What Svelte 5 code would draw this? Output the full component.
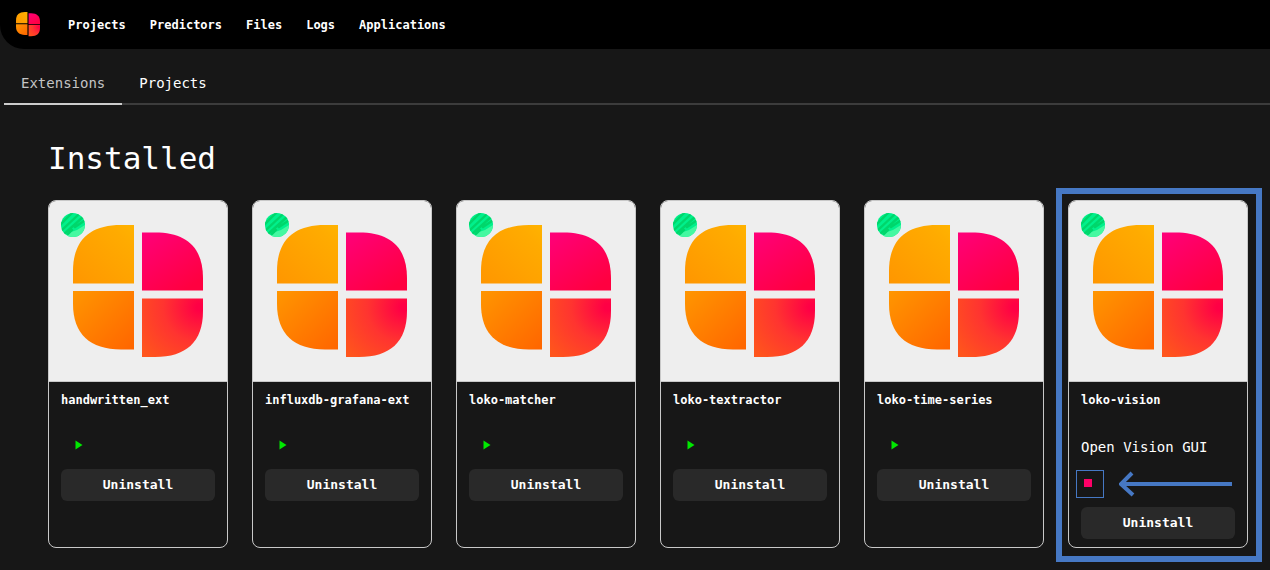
<script>
  const links = ['Projects', 'Predictors', 'Files', 'Logs', 'Applications'];
  const extensions = [
    { name: 'handwritten_ext' },
    { name: 'influxdb-grafana-ext' },
    { name: 'loko-matcher' },
    { name: 'loko-textractor' },
    { name: 'loko-time-series' },
    { name: 'loko-vision', gui: 'Open Vision GUI', running: true }
  ];
</script>

{#snippet logo(id)}
  <svg class="logo" viewBox="0 0 130 132" aria-hidden="true">
    <defs>
      <linearGradient id="{id}-a" x1="0" y1="1" x2="1" y2="0"><stop stop-color="#ff9600" /><stop offset="0.8" stop-color="#ffab00" /><stop offset="1" stop-color="#ffb300" /></linearGradient>
      <linearGradient id="{id}-b" x1="0" y1="0" x2="0.7" y2="1"><stop stop-color="#ff007a" /><stop offset="1" stop-color="#ff0040" /></linearGradient>
      <linearGradient id="{id}-c" x1="0" y1="0" x2="1" y2="1"><stop stop-color="#ff9600" /><stop offset="1" stop-color="#ff6500" /></linearGradient>
      <radialGradient id="{id}-d" cx="0.95" cy="0.15" r="1.2"><stop offset="0.05" stop-color="#ff0045" /><stop offset="0.5" stop-color="#ff3430" /><stop offset="1" stop-color="#ff551c" /></radialGradient>
    </defs>
    {#if id === 'brand'}
      <path fill="url(#{id}-a)" d="M62 0V61H0V46C0 15 17 0 48 0Z" />
      <path fill="url(#{id}-b)" d="M68 7H82C114 7 130 23 130 53V66H68Z" />
      <path fill="url(#{id}-c)" d="M0 66H62V124H48C17 124 0 109 0 79Z" />
      <path fill="url(#{id}-d)" d="M68 71H130V86C130 117 113 132 82 132H68Z" />
    {:else}
      <path fill="url(#{id}-a)" d="M61 0V58.5H0V46C0 15 17 0 48 0Z" />
      <path fill="url(#{id}-b)" d="M69 7.5H82C114 7.5 130 23 130 53V65.5H69Z" />
      <path fill="url(#{id}-c)" d="M0 66H61V124.5H48C17 124.5 0 109 0 79Z" />
      <path fill="url(#{id}-d)" d="M69 73.5H130V86C130 117 113 132 82 132H69Z" />
    {/if}
  </svg>
{/snippet}

<header>
  <a class="brand" href="#home" aria-label="Home">{@render logo('brand')}</a>
  <nav>
    {#each links as link}
      <a href="#{link.toLowerCase()}">{link}</a>
    {/each}
  </nav>
</header>

<div class="tabs" role="tablist">
  <button role="tab" aria-selected="true">Extensions</button>
  <button role="tab" aria-selected="false">Projects</button>
</div>

<main>
  <h1>Installed</h1>
  <div class="cards">
    {#each extensions as ext, i}
      <article class:marked={ext.running}>
        <div class="cover">
          {@render logo(`ext${i}`)}
          <svg class="status" viewBox="0 0 24 24" aria-hidden="true">
            <defs><clipPath id="dot{i}"><circle cx="12" cy="12" r="12" /></clipPath></defs>
            <g clip-path="url(#dot{i})">
              <rect width="24" height="24" fill="#00f08c" />
              <path fill="#45f8a1" d="M24 12V24H4L10 19L16 17Z" />
              <path d="M-2 13L11 0M0 18L17 2M2 22L22 4M7 21L11 17M14 14L23 8" fill="none" stroke="#00d66b" stroke-width="2.4" stroke-linecap="round" />
            </g>
          </svg>
        </div>
        <div class="body">
          <h2>{ext.name}</h2>
          {#if ext.gui}
            <a class="gui" href="#vision">{ext.gui}</a>
            <div class="stop-row">
              <button class="stop" aria-label="Stop"><svg viewBox="0 0 8 8"><path d="M0 0H8V8H0Z" fill="#ff0068" /></svg></button>
              <svg class="arrow" viewBox="0 0 114 26" aria-hidden="true"><path d="M113 13H3M13 2L2 13L14 24" fill="none" stroke="#4678c4" stroke-width="4" /></svg>
            </div>
          {:else}
            <button class="play" aria-label="Start"><svg viewBox="0 0 8 10"><path d="M0.5 0.5L7.5 5L0.5 9.5Z" fill="#00e800" /></svg></button>
          {/if}
          <button class="uninstall">Uninstall</button>
        </div>
      </article>
    {/each}
  </div>
</main>

<style>
  :global(body) {
    margin: 0;
    background: #171717;
    color: #fff;
    font-family: "DejaVu Sans Mono", "Liberation Mono", monospace;
    overflow-x: hidden;
  }
  button {
    margin: 0;
    padding: 0;
    border: 0;
    background: none;
    color: inherit;
    font: inherit;
    cursor: pointer;
  }
  a { color: inherit; text-decoration: none; }
  svg { display: block; }
  header {
    display: flex;
    align-items: center;
    gap: 28px;
    height: 49px;
    padding-left: 16px;
    box-sizing: border-box;
    background: #000;
    border-bottom-left-radius: 24px;
  }
  .brand { width: 24px; }
  .brand .logo { width: 24px; }
  nav {
    display: flex;
    gap: 24px;
    font-size: 12px;
    font-weight: 700;
  }
  .tabs {
    display: flex;
    height: 56px;
    margin-left: 4px;
    box-sizing: border-box;
    border-bottom: 2px solid #3c3c3c;
    font-size: 14px;
  }
  .tabs button {
    height: 56px;
    padding: 14px 17px 0;
    box-sizing: border-box;
    border-bottom: 2px solid transparent;
  }
  .tabs button[aria-selected="true"] {
    color: #c4c4c4;
    border-bottom-color: #ccc;
  }
  main { padding: 32px 22px 22px 48px; }
  h1 {
    margin: 0 0 21px;
    font-size: 31px;
    line-height: 42px;
    font-weight: 400;
  }
  .cards {
    display: grid;
    grid-template-columns: repeat(auto-fill, 180px);
    gap: 24px;
  }
  article {
    position: relative;
    display: flex;
    flex-direction: column;
    min-height: 348px;
    box-sizing: border-box;
    border: 1px solid #c8c8c8;
    border-radius: 8px;
  }
  .marked::after {
    content: "";
    position: absolute;
    inset: -13px -15px -15px -13px;
    border: 6px solid #4678c4;
    pointer-events: none;
  }
  .cover {
    position: relative;
    padding: 24px;
    height: 132px;
    background: #eee;
    border-bottom: 1px solid #c8c8c8;
    border-radius: 7px 7px 0 0;
  }
  .cover .logo { width: 130px; }
  .status {
    position: absolute;
    top: 12px;
    left: 12px;
    width: 24px;
  }
  .body {
    display: flex;
    flex-direction: column;
    align-items: flex-start;
    padding: 8px 12px;
  }
  h2 {
    margin: 0;
    font-size: 12px;
    line-height: 20px;
    white-space: nowrap;
  }
  .play {
    display: flex;
    align-items: center;
    height: 24px;
    margin: 23px 0 12px;
    padding: 0 14px;
  }
  .play svg { width: 8px; }
  .gui {
    margin-top: 26px;
    font-size: 14px;
    line-height: 22px;
    white-space: nowrap;
  }
  .stop-row {
    display: flex;
    align-items: center;
    gap: 15px;
    margin: 12px 0 9px -5px;
  }
  .stop {
    width: 28px;
    height: 28px;
    padding: 0 7px 2px;
    box-sizing: border-box;
    border: 1px solid #4678c4;
  }
  .stop svg { width: 8px; }
  .arrow { width: 114px; }
  .uninstall {
    width: 100%;
    height: 32px;
    padding-bottom: 2px;
    border-radius: 6px;
    background: #292929;
    font-size: 13px;
    font-weight: 700;
  }
</style>
